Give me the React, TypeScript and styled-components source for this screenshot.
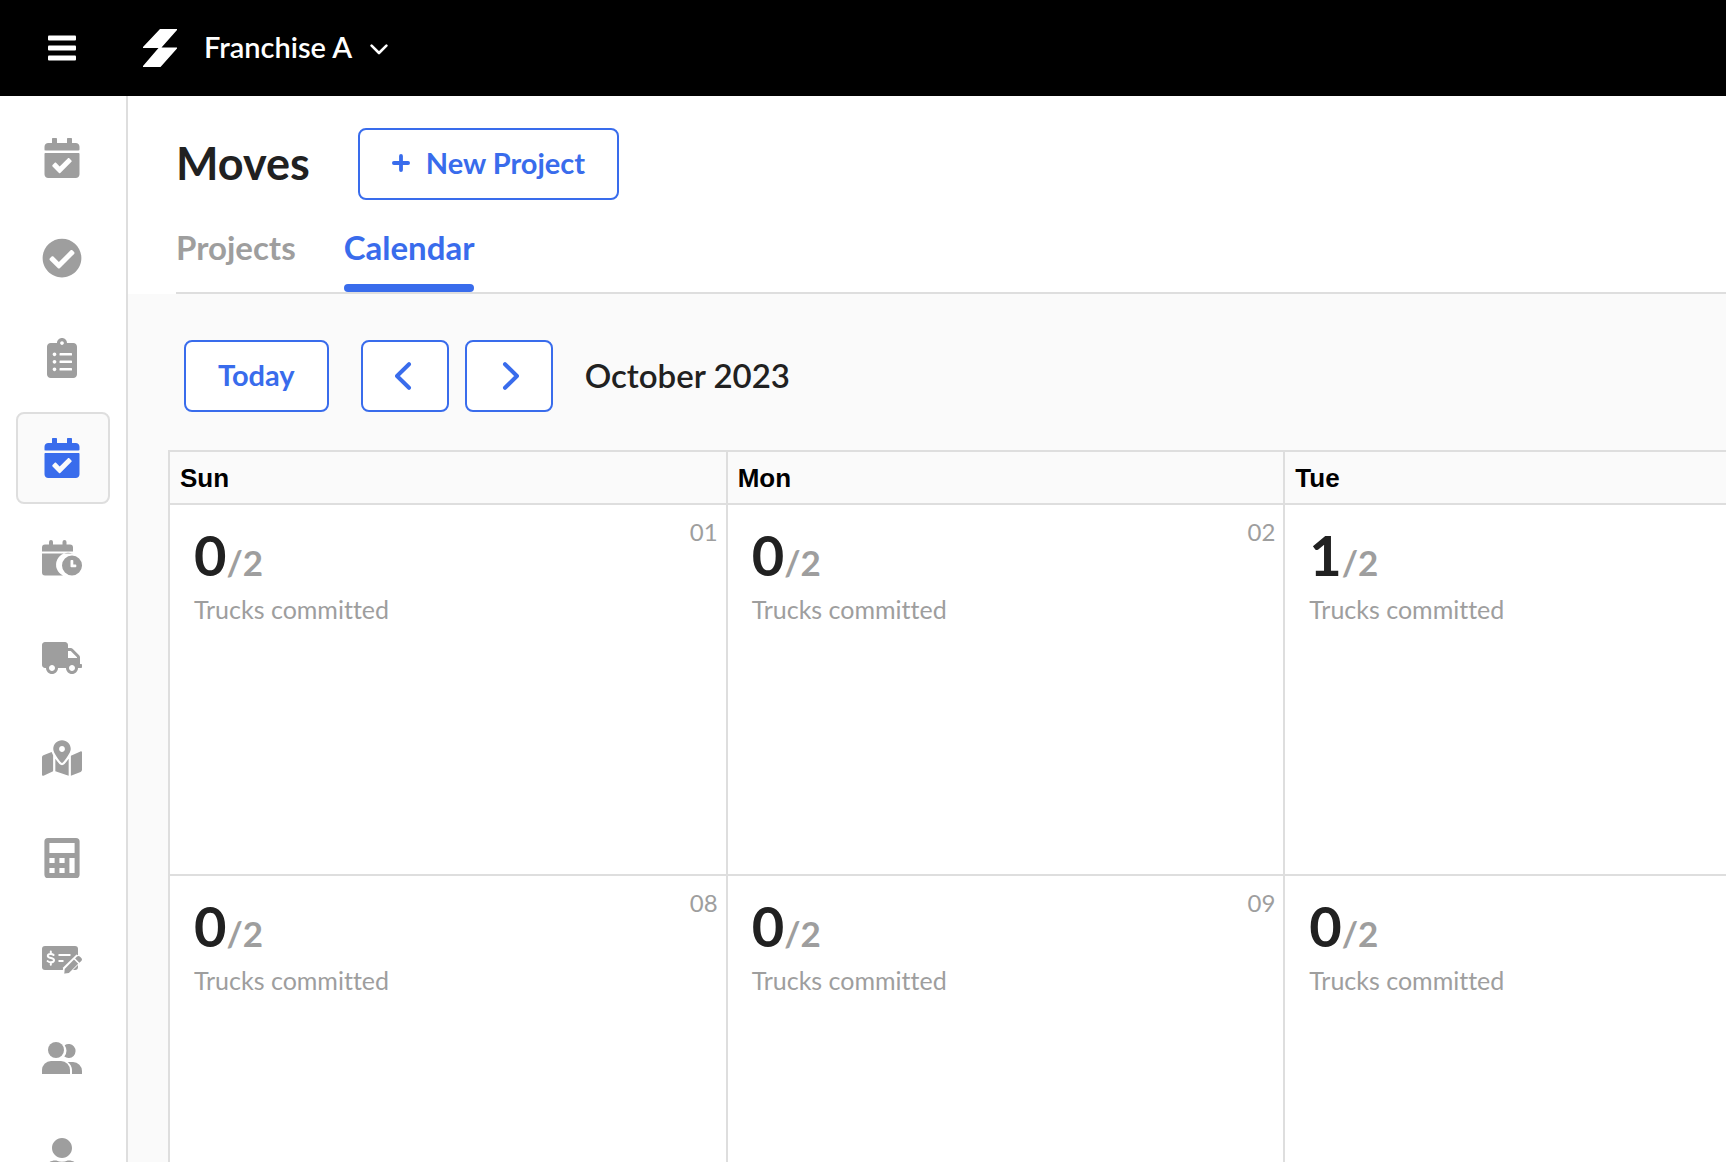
import React from "react";
import styled, { createGlobalStyle, css } from "styled-components";
import {
  FaCalendarCheck,
  FaCheckCircle,
  FaClipboardList,
  FaTruck,
  FaMapMarkedAlt,
  FaUser,
} from "react-icons/fa";

const font = `Lato, "Open Sans", sans-serif`;
const blue = "#396cec";
const grey = "#9e9e9e";
const ink = "#212121";
const line = "#dedede";
const paper = "#fafafa";

const GlobalStyle = createGlobalStyle`
  *, *::before, *::after { box-sizing: border-box; }
  html, body, #root { height: 100%; }
  body {
    margin: 0;
    background: #fff;
    color: ${ink};
    font-family: ${font};
    font-variant-ligatures: none;
    overflow: hidden;
  }
  button { font-family: inherit; cursor: pointer; }
`;

const Page = styled.div`
  display: flex;
  flex-direction: column;
  height: 100%;
`;

const TopBar = styled.header`
  display: flex;
  align-items: center;
  flex: none;
  height: 96px;
  padding-left: 48px;
  background: #000;
  color: #fff;
`;

const PlainButton = styled.button`
  display: flex;
  align-items: center;
  padding: 0;
  border: 0;
  background: none;
  color: inherit;
`;

const Logo = styled.svg`
  display: block;
  margin: 0 27px 0 67px;
`;

const FranchiseButton = styled(PlainButton)`
  gap: 18px;
  padding-bottom: 2px;
  font-size: 29px;
  line-height: 40px;
  font-weight: 600;
  svg { margin-top: 4px; }
`;

const Body = styled.div`
  display: flex;
  flex: 1;
  min-height: 0;
`;

const Sidebar = styled.nav`
  display: flex;
  flex-direction: column;
  flex: none;
  gap: 8px;
  width: 128px;
  padding: 16px;
  border-right: 2px solid ${line};
  overflow: hidden;
`;

const NavLink = styled.a<{ $active?: boolean }>`
  display: flex;
  flex: none;
  align-items: center;
  justify-content: center;
  height: 92px;
  padding-right: 2px;
  border: 2px solid transparent;
  border-radius: 8px;
  color: ${grey};
  ${(p) =>
    p.$active &&
    css`
      border-color: ${line};
      background: ${paper};
      color: ${blue};
    `}
  svg { display: block; }
`;

const Main = styled.main`
  flex: 1;
  min-width: 0;
  overflow: hidden;
  background: ${paper};
`;

const PageHeader = styled.div`
  padding: 32px 0 0 48px;
  background: #fff;
`;

const TitleRow = styled.div`
  display: flex;
  align-items: center;
  gap: 48px;
`;

const Title = styled.h1`
  margin: 0;
  padding-bottom: 2px;
  font-size: 45px;
  line-height: 56px;
  font-weight: 700;
`;

const OutlineButton = styled.button<{ $icon?: boolean }>`
  display: flex;
  align-items: center;
  justify-content: center;
  gap: 16px;
  height: 72px;
  padding: 0 32px 2px;
  border: 2px solid ${blue};
  border-radius: 8px;
  background: #fff;
  color: ${blue};
  font-size: 29px;
  line-height: 40px;
  font-weight: 700;
  ${(p) =>
    p.$icon &&
    css`
      width: 88px;
      padding: 0;
    `}
`;

const Tabs = styled.div`
  display: flex;
  gap: 48px;
  height: 94px;
  border-bottom: 2px solid ${line};
`;

const Tab = styled.button<{ $active?: boolean }>`
  display: flex;
  align-items: flex-start;
  padding: 27px 0 0;
  border: 0;
  background: none;
  color: ${(p) => (p.$active ? blue : grey)};
  font-size: 33px;
  line-height: 40px;
  font-weight: 700;
  position: relative;
  &::after {
    content: "";
    position: absolute;
    left: 0;
    right: 0;
    bottom: 0;
    height: 8px;
    border-radius: 4px;
    background: ${(p) => (p.$active ? blue : "transparent")};
  }
`;

const Toolbar = styled.div`
  display: flex;
  align-items: center;
  gap: 32px;
  padding: 46px 0 38px 56px;
`;

const Stepper = styled.div`
  display: flex;
  gap: 16px;
`;

const Month = styled.h2`
  margin: 0;
  padding-bottom: 2px;
  font-size: 33px;
  line-height: 40px;
  font-weight: 600;
`;

const Calendar = styled.table`
  margin-left: 40px;
  table-layout: fixed;
  border-collapse: separate;
  border-spacing: 0;
  width: 1675px;
  border: solid ${line};
  border-width: 2px 0 0 2px;
`;

const DayName = styled.th`
  height: 53px;
  padding: 0 10px;
  border: solid ${line};
  border-width: 0 2px 2px 0;
  color: #000;
  font-family: "Liberation Sans", Arial, sans-serif;
  font-size: 26px;
  line-height: 32px;
  text-align: left;
`;

const DayCell = styled.td`
  height: 371px;
  padding: 0;
  border: solid ${line};
  border-width: 0 2px 2px 0;
  background: #fff;
  vertical-align: top;
`;

const CellTop = styled.div`
  display: flex;
  align-items: flex-start;
  justify-content: space-between;
  padding: 11px 8px 0 24px;
`;

const Count = styled.div`
  padding-top: 8px;
  font-size: 56px;
  line-height: 62px;
  font-weight: 700;
`;

const Capacity = styled.span`
  color: ${grey};
  font-size: 35px;
`;

const DateNumber = styled.time`
  color: ${grey};
  font-size: 24px;
  line-height: 32px;
`;

const Caption = styled.div`
  padding: 0 24px;
  color: ${grey};
  font-size: 25px;
  line-height: 32px;
`;

const MenuIcon = () => (
  <svg width="28" height="26" viewBox="0 0 28 26" fill="currentColor" aria-hidden="true">
    <rect y="0.5" width="28" height="5" rx="1" />
    <rect y="10.5" width="28" height="5" rx="1" />
    <rect y="20.5" width="28" height="5" rx="1" />
  </svg>
);

const ChevronDown = () => (
  <svg width="18" height="11" viewBox="0 0 18 11" fill="none" stroke="currentColor" strokeWidth="2.6" strokeLinecap="round" strokeLinejoin="round" aria-hidden="true">
    <path d="M1.6 1.6 9 9l7.400-7.400" />
  </svg>
);

const PlusIcon = () => (
  <svg width="18" height="18" viewBox="0 0 18 18" stroke="currentColor" strokeWidth="3.8" strokeLinecap="round" aria-hidden="true">
    <path d="M9 1.900v14.200M1.900 9h14.200" />
  </svg>
);

const Chevron = ({ flip }: { flip?: boolean }) => (
  <svg width="20" height="28" viewBox="0 0 20 28" fill="none" stroke="currentColor" strokeWidth="4" strokeLinecap="round" strokeLinejoin="round" aria-hidden="true">
    <path d={flip ? "M6 2.200 18 14 6 25.800" : "M14 2.200 2 14l12 11.800"} />
  </svg>
);

const CalendarClockIcon = () => (
  <svg width="40" height="36" viewBox="0 0 40 36" fill="currentColor" aria-hidden="true">
    <path d="M0 11.500V7.500a3 3 0 0 1 3-3h4V2a2 2 0 0 1 4 0v2.500h9.500V2a2 2 0 0 1 4 0v2.500H28a3 3 0 0 1 3 3v4z" />
    <path d="M0 13.500h31v.3A11.600 11.600 0 0 0 21 35.500H3a3 3 0 0 1-3-3z" />
    <path fillRule="evenodd" d="M30 15.500a10 10 0 1 1 0 20 10 10 0 0 1 0-20zm-.7 4.500a.8.8 0 0 0-.8.8v5.600c0 .5.300.8.800.8h4.200c.5 0 .8-.3.800-.8v-1.200c0-.5-.3-.8-.8-.8h-2.200v-3.600c0-.5-.3-.8-.8-.8z" />
  </svg>
);

const CalculatorIcon = () => (
  <svg width="36" height="40" viewBox="0 0 36 40" fill="currentColor" aria-hidden="true">
    <path fillRule="evenodd" d="M4 0h28a3.600 3.600 0 0 1 3.600 3.600v32.800A3.600 3.600 0 0 1 32 40H4a3.600 3.600 0 0 1-3.600-3.600V3.600A3.600 3.600 0 0 1 4 0zm1.400 5v10h25.200V5zm0 15v5h5.200v-5zm10 0v5h5.200v-5zm10 0v15h5.200V20zm-20 10v5h5.200v-5zm10 0v5h5.200v-5z" />
  </svg>
);

const CheckPenIcon = () => (
  <svg width="40" height="32" viewBox="0 0 40 32" fill="none" aria-hidden="true">
    <rect y="4" width="36" height="24" rx="3" fill="currentColor" />
    <g stroke="#fff" strokeLinecap="round">
      <path strokeWidth="2" d="M11.600 13c-.7-.8-1.700-1.100-2.900-1.100-1.700 0-2.900.8-2.900 2 0 2.800 6.200 1.500 6.200 4.300 0 1.300-1.300 2.100-3.200 2.100-1.300 0-2.400-.4-3.200-1.200M8.800 9.500v2.200M8.800 20.500v2.200" />
      <path strokeWidth="2" strokeLinecap="butt" d="M16.500 13h12M16.500 19H21.500" />
    </g>
    <path fill="#fff" d="M20.500 32l.6-6.600L34.500 12.500l8 4L27 32z" />
    <path fill="currentColor" d="M22.300 31.500l.4-4.600 9.300-9.300 4.200 4.200-9.300 9.300-4 .5a.6.6 0 0 1-.6-.1zM33.100 16.500l1.900-1.900a2 2 0 0 1 2.800 0l1.500 1.500a2 2 0 0 1 0 2.800l-1.900 1.900z" />
  </svg>
);

const UsersIcon = () => (
  <svg width="40" height="32" viewBox="0 0 40 32" fill="currentColor" aria-hidden="true">
    <circle cx="14" cy="8" r="8" />
    <path d="M9 19h10a9 9 0 0 1 9 9v4H0v-4a9 9 0 0 1 9-9z" />
    <path d="M22.700 3.200A7 7 0 1 1 22.300 14.600a10 10 0 0 0 .4-11.400z" />
    <path d="M25.800 20H31a9 9 0 0 1 9 9v3H30v-4a11 11 0 0 0-4.200-8z" />
  </svg>
);

const navItems = [
  { label: "Schedule", icon: <FaCalendarCheck size={40} /> },
  { label: "Tasks", icon: <FaCheckCircle size={40} /> },
  { label: "Orders", icon: <FaClipboardList size={40} /> },
  { label: "Moves", icon: <FaCalendarCheck size={40} />, active: true },
  { label: "Availability", icon: <CalendarClockIcon /> },
  { label: "Trucks", icon: <FaTruck size={40} /> },
  { label: "Map", icon: <FaMapMarkedAlt size={40} /> },
  { label: "Estimates", icon: <CalculatorIcon /> },
  { label: "Payments", icon: <CheckPenIcon /> },
  { label: "Customers", icon: <UsersIcon /> },
  { label: "Account", icon: <FaUser size={40} /> },
];

const days = ["Sun", "Mon", "Tue"];

type Day = { used: number; date?: string };

const weeks: Day[][] = [
  [{ date: "01", used: 0 }, { date: "02", used: 0 }, { used: 1 }],
  [{ date: "08", used: 0 }, { date: "09", used: 0 }, { used: 0 }],
];

export default function App() {
  return (
    <Page>
      <GlobalStyle />
      <TopBar>
        <PlainButton aria-label="Menu">
          <MenuIcon />
        </PlainButton>
        <Logo width="34" height="38" viewBox="0 0 34 38" fill="#fff" aria-hidden="true">
          <path d="M17 0h17v1L18.500 18.500H34v1L17.500 38H0v-1L15.500 19H0v-1z" />
        </Logo>
        <FranchiseButton>
          Franchise A
          <ChevronDown />
        </FranchiseButton>
      </TopBar>
      <Body>
        <Sidebar>
          {navItems.map((item) => (
            <NavLink key={item.label} href="#" aria-label={item.label} $active={item.active}>
              {item.icon}
            </NavLink>
          ))}
        </Sidebar>
        <Main>
          <PageHeader>
            <TitleRow>
              <Title>Moves</Title>
              <OutlineButton>
                <PlusIcon />
                New Project
              </OutlineButton>
            </TitleRow>
            <Tabs role="tablist">
              <Tab role="tab" aria-selected={false}>Projects</Tab>
              <Tab role="tab" aria-selected $active>Calendar</Tab>
            </Tabs>
          </PageHeader>
          <Toolbar>
            <OutlineButton>Today</OutlineButton>
            <Stepper>
              <OutlineButton $icon aria-label="Previous month"><Chevron /></OutlineButton>
              <OutlineButton $icon aria-label="Next month"><Chevron flip /></OutlineButton>
            </Stepper>
            <Month>October 2023</Month>
          </Toolbar>
          <Calendar>
            <thead>
              <tr>
                {days.map((day) => (
                  <DayName key={day} scope="col">{day}</DayName>
                ))}
              </tr>
            </thead>
            <tbody>
              {weeks.map((week, row) => (
                <tr key={row}>
                  {week.map((day, column) => (
                    <DayCell key={column}>
                      <CellTop>
                        <Count>
                          {day.used}
                          <Capacity>/2</Capacity>
                        </Count>
                        {day.date && (
                          <DateNumber dateTime={`2023-10-${day.date}`}>{day.date}</DateNumber>
                        )}
                      </CellTop>
                      <Caption>Trucks committed</Caption>
                    </DayCell>
                  ))}
                </tr>
              ))}
            </tbody>
          </Calendar>
        </Main>
      </Body>
    </Page>
  );
}
